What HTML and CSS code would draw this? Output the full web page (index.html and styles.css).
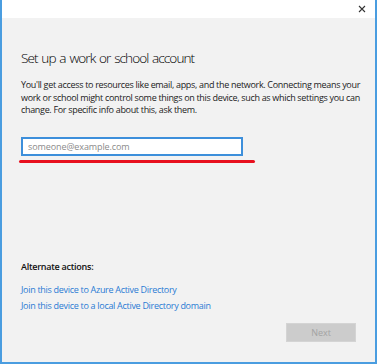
FILE: index.html
```html
<!DOCTYPE html>
<html lang="en">
<head>
  <meta charset="UTF-8" />
  <title>Set up a work or school account</title>
  <link rel="stylesheet" href="styles.css">
</head>
<body>
  <div class="window">
    <div class="titlebar">
      <span class="close">
        <svg width="8" height="8" viewBox="0 0 8 8"><path d="M1 1L7 7M7 1L1 7" stroke="#333" stroke-width="1.1" fill="none"/></svg>
      </span>
    </div>
    <div class="content">
      <h1>Set up a work or school account</h1>
      <p class="intro">You'll get access to resources like email, apps, and the network. Connecting means your work or school might control some things on this device, such as which settings you can change. For specific info about this, ask them.</p>

      <div class="field">
        <input type="text" placeholder="someone@example.com" autofocus />
      </div>
      <div class="mark"></div>

      <div class="alternate">
        <h2>Alternate actions:</h2>
        <a href="#">Join this device to Azure Active Directory</a>
        <a href="#">Join this device to a local Active Directory domain</a>
      </div>

      <div class="footer">
        <button disabled>Next</button>
      </div>
    </div>
  </div>
</body>
</html>
```

FILE: styles.css
```css
html, body {
  margin: 0;
  padding: 0;
  background: #fff;
}
body {
  font-family: 'Open Sans', 'Noto Sans', sans-serif;
  color: #000;
}
.window {
  width: 377px;
  height: 364px;
  box-sizing: border-box;
  border: 2px solid #4a9de0;
  border-top: none;
  display: flex;
  flex-direction: column;
  background: #f2f2f2;
}
.titlebar {
  height: 18px;
  background: #fff;
  display: flex;
  justify-content: flex-end;
  align-items: center;
  padding-right: 9px;
}
.close {
  display: flex;
  width: 8px;
  height: 8px;
}
.content {
  flex: 1;
  display: flex;
  flex-direction: column;
  padding: 0 19px;
}
h1 {
  font-weight: 300;
  font-size: 13.6px;
  letter-spacing: -0.95px;
  word-spacing: 1.2px;
  margin: 30px 0 0;
  line-height: 20px;
  color: #000;
}
.intro {
  font-size: 9px;
  letter-spacing: -0.32px;
  line-height: 12.7px;
  margin: 11px -4px 0 0;
  color: #222;
}
.field {
  margin-top: 20px;
  width: 222px;
  height: 19px;
  box-sizing: border-box;
  border: 2px solid #3d8fdb;
  background: #fff;
  display: flex;
}
.field input {
  border: none;
  outline: none;
  width: 100%;
  padding: 0 0 0 5px;
  font-family: inherit;
  font-size: 9px;
  letter-spacing: -0.1px;
  background: transparent;
  color: #333;
  caret-color: #000;
}
.field input::placeholder {
  color: #8a8a8a;
}
.mark {
  width: 236px;
  height: 3px;
  margin: 4px 0 0 -2px;
  background: #e8101e;
  border-radius: 2px;
}
.alternate {
  margin-top: auto;
  display: flex;
  flex-direction: column;
}
h2 {
  font-size: 9px;
  font-weight: 600;
  letter-spacing: -0.25px;
  margin: 0 0 9px;
  line-height: 12px;
  color: #111;
}
.alternate a {
  font-size: 9px;
  letter-spacing: -0.3px;
  line-height: 16px;
  color: #2a7bd4;
  text-decoration: none;
}
.footer {
  display: flex;
  justify-content: flex-end;
  margin: 9px 0 20px;
}
button {
  width: 70px;
  height: 19px;
  font-family: inherit;
  font-size: 9px;
  background: #cccccc;
  color: #a3a3a3;
  border: 1px solid #d4d4d4;
  padding: 0;
}
```
